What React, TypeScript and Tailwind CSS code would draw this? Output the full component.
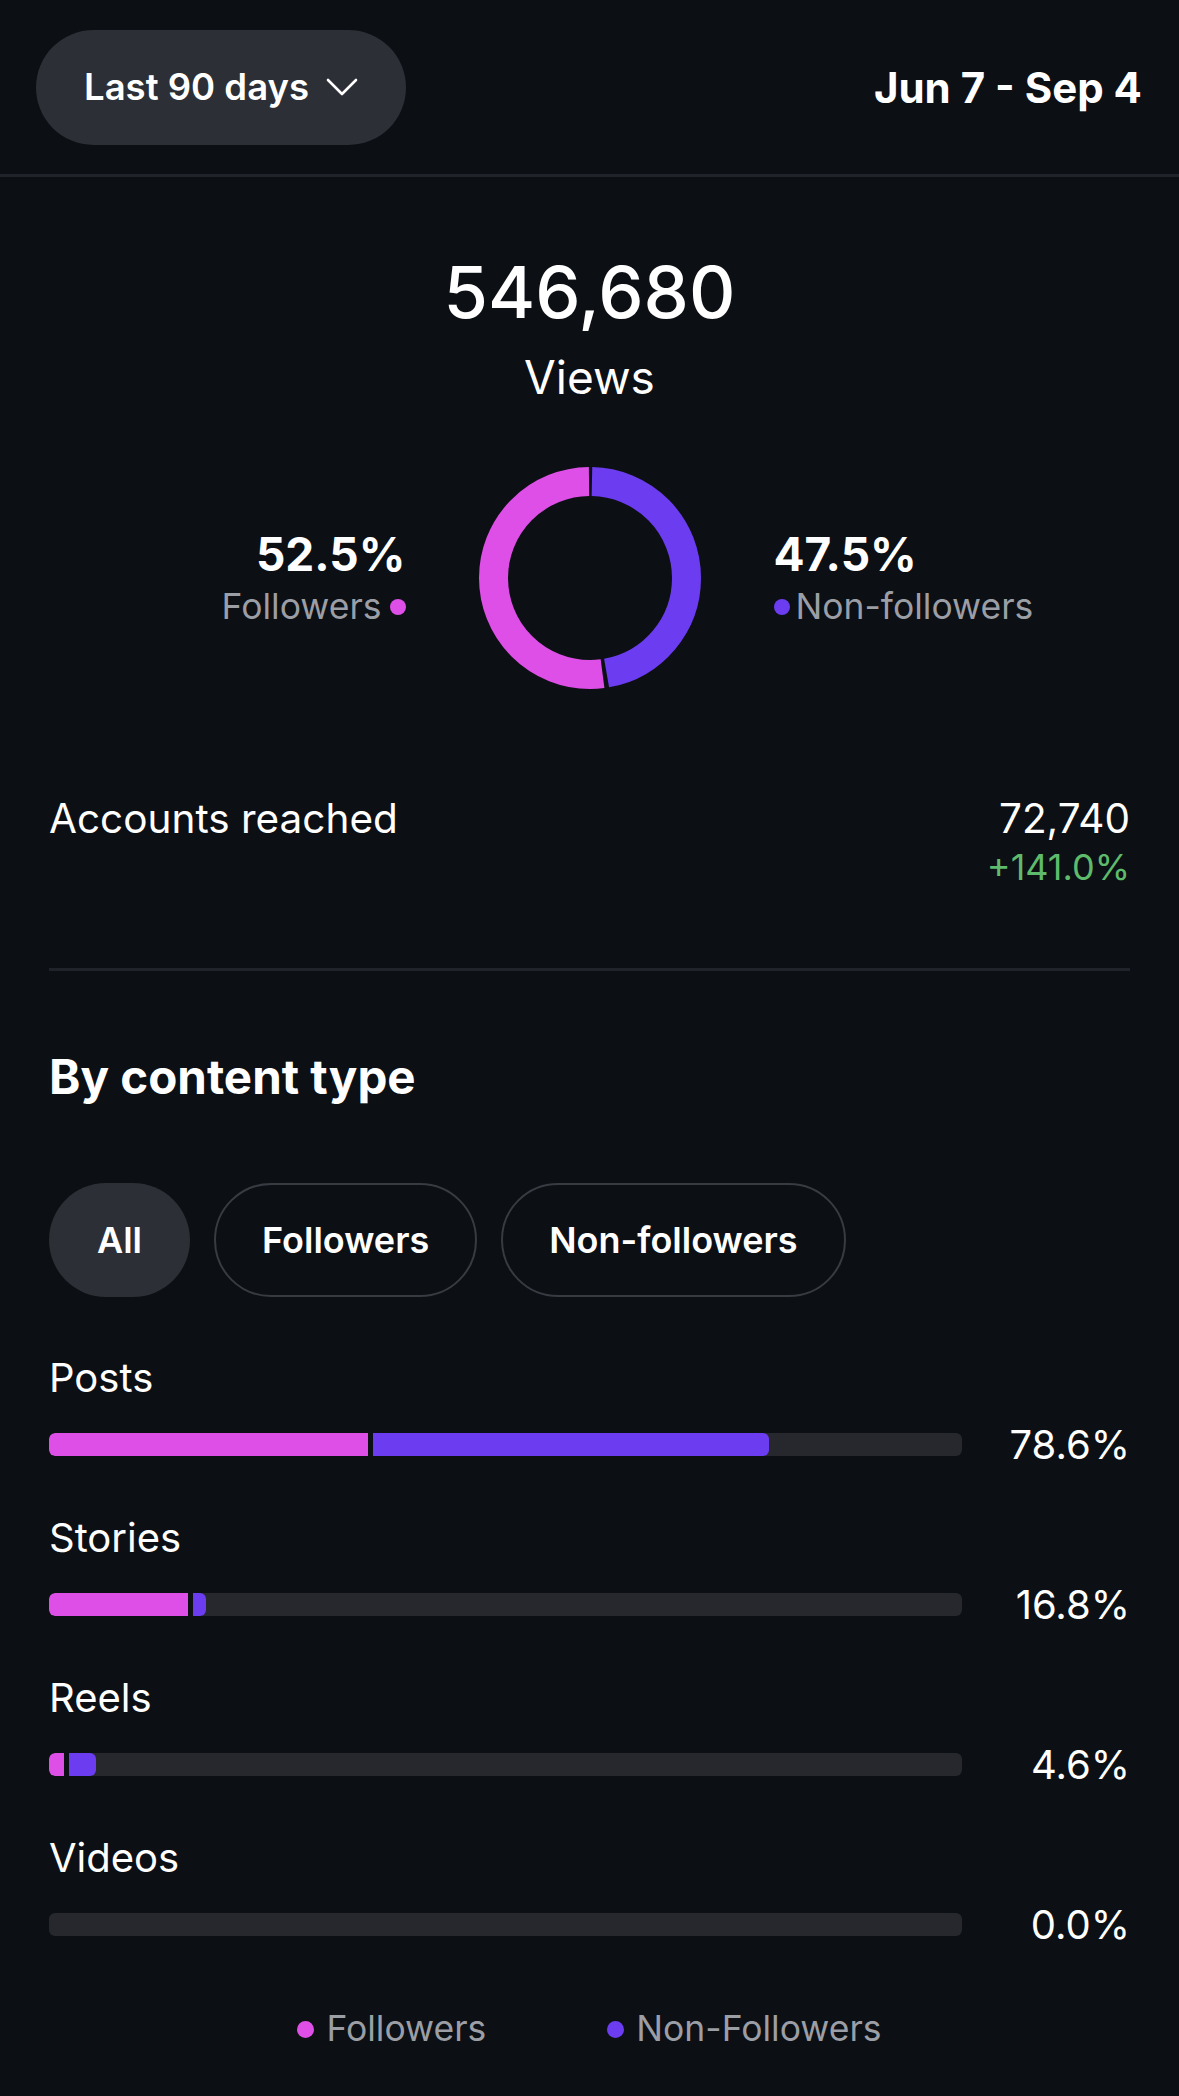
import React from "react";

const PINK = "#de4fe7";
const PURPLE = "#6c3cf0";

type Row = { label: string; pct: string; pink: number; purple: number };

const rows: Row[] = [
  { label: "Posts", pct: "78.6%", pink: 319, purple: 396 },
  { label: "Stories", pct: "16.8%", pink: 139, purple: 13 },
  { label: "Reels", pct: "4.6%", pink: 15, purple: 27 },
  { label: "Videos", pct: "0.0%", pink: 0, purple: 0 },
];

function Donut() {
  const size = 222;
  const stroke = 29;
  const r = (size - stroke) / 2;
  const c = 2 * Math.PI * r;
  const gap = 2;
  const purpleLen = 0.475 * c;
  return (
    <svg width={size} height={size} viewBox={`0 0 ${size} ${size}`} className="-rotate-90">
      <circle
        cx={size / 2}
        cy={size / 2}
        r={r}
        fill="none"
        stroke={PURPLE}
        strokeWidth={stroke}
        strokeDasharray={`${purpleLen - gap * 2} ${c}`}
        strokeDashoffset={-gap}
      />
      <circle
        cx={size / 2}
        cy={size / 2}
        r={r}
        fill="none"
        stroke={PINK}
        strokeWidth={stroke}
        strokeDasharray={`${c - purpleLen - gap * 2} ${c}`}
        strokeDashoffset={-(purpleLen + gap)}
      />
    </svg>
  );
}

function Bar({ row }: { row: Row }) {
  return (
    <div>
      <div className="text-[40px] leading-[48px] text-white">{row.label}</div>
      <div className="mt-[31px] flex h-[23px] items-center">
        <div className="flex h-[23px] w-[913px] overflow-hidden rounded-[6px] bg-[#26282e]">
          {row.pink > 0 && (
            <div className="h-full rounded-l-[6px]" style={{ width: row.pink, background: PINK }} />
          )}
          {row.purple > 0 && (
            <div
              className="h-full rounded-r-[6px] border-l-[5px] border-[#0c0f14]"
              style={{ width: row.purple + 5, background: PURPLE }}
            />
          )}
        </div>
        <div className="flex-1 text-right text-[40px] leading-[23px] text-white">{row.pct}</div>
      </div>
    </div>
  );
}

export default function App() {
  return (
    <div
      className="min-h-[2096px] w-[1179px] bg-[#0c0f14] text-white"
      style={{ fontFamily: "Inter, 'Noto Sans', sans-serif" }}
    >
      {/* header */}
      <div className="flex h-[177px] items-center justify-between border-b-[3px] border-[#202329] pl-[36px] pr-[37px]">
        <button className="flex h-[115px] items-center gap-[17px] rounded-full bg-[#2c2f35] px-[48px] text-[36.5px] font-semibold text-white">
          Last 90 days
          <svg width="32" height="19" viewBox="0 0 32 19" fill="none">
            <polyline points="2,2 16,16 30,2" stroke="white" strokeWidth="2.6" strokeLinecap="round" strokeLinejoin="round" />
          </svg>
        </button>
        <div className="text-[42px] font-bold">Jun 7 - Sep 4</div>
      </div>

      {/* views */}
      <div className="mt-[79px] flex flex-col items-center">
        <div className="text-[72px] font-medium leading-none">546,680</div>
        <div className="mt-[26px] text-[46px] leading-none">Views</div>
      </div>

      <div className="mt-[67px] grid grid-cols-[1fr_222px_1fr] items-center gap-x-[73px]">
        <div className="flex flex-col items-end">
          <div className="text-[46px] font-bold leading-[52px]">52.5%</div>
          <div className="mt-[6px] flex items-center gap-[8px] text-[35.5px] leading-[42px] text-[#9b9ea5]">
            Followers
            <span className="h-[16px] w-[16px] rounded-full" style={{ background: PINK }} />
          </div>
        </div>
        <Donut />
        <div className="flex flex-col items-start">
          <div className="text-[46px] font-bold leading-[52px]">47.5%</div>
          <div className="mt-[6px] flex items-center gap-[6px] text-[35.5px] leading-[42px] text-[#9b9ea5]">
            <span className="h-[16px] w-[16px] rounded-full" style={{ background: PURPLE }} />
            Non-followers
          </div>
        </div>
      </div>

      <div className="px-[49px]">
        {/* accounts reached */}
        <div className="mt-[106px] flex justify-between">
          <div className="text-[40.5px] leading-[48px]">Accounts reached</div>
          <div className="flex flex-col items-end">
            <div className="text-[40.5px] leading-[48px]">72,740</div>
            <div className="mt-[3px] text-[36px] leading-[42px] text-[#5dbb6b]">+141.0%</div>
          </div>
        </div>

        <div className="mt-[80px] h-[3px] bg-[#202329]" />

        <div className="mt-[80px] text-[47.5px] font-bold leading-[52px]">By content type</div>

        <div className="mt-[80px] flex gap-[24px]">
          <div className="flex h-[114px] items-center rounded-full bg-[#2c2f35] px-[48px] text-[36px] font-semibold">
            All
          </div>
          <div className="flex h-[114px] items-center rounded-full border-2 border-[#383b41] px-[46px] text-[36px] font-semibold">
            Followers
          </div>
          <div className="flex h-[114px] items-center rounded-full border-2 border-[#383b41] px-[46px] text-[36px] font-semibold">
            Non-followers
          </div>
        </div>

        <div className="mt-[57px] flex flex-col gap-[58px]">
          {rows.map((row) => (
            <Bar key={row.label} row={row} />
          ))}
        </div>

        <div className="mt-[72px] flex justify-center gap-[121px] text-[35.5px] leading-[42px] text-[#9b9ea5]">
          <div className="flex items-center gap-[12px]">
            <span className="h-[17px] w-[17px] rounded-full" style={{ background: PINK }} />
            Followers
          </div>
          <div className="flex items-center gap-[12px]">
            <span className="h-[17px] w-[17px] rounded-full" style={{ background: PURPLE }} />
            Non-Followers
          </div>
        </div>
      </div>
    </div>
  );
}
